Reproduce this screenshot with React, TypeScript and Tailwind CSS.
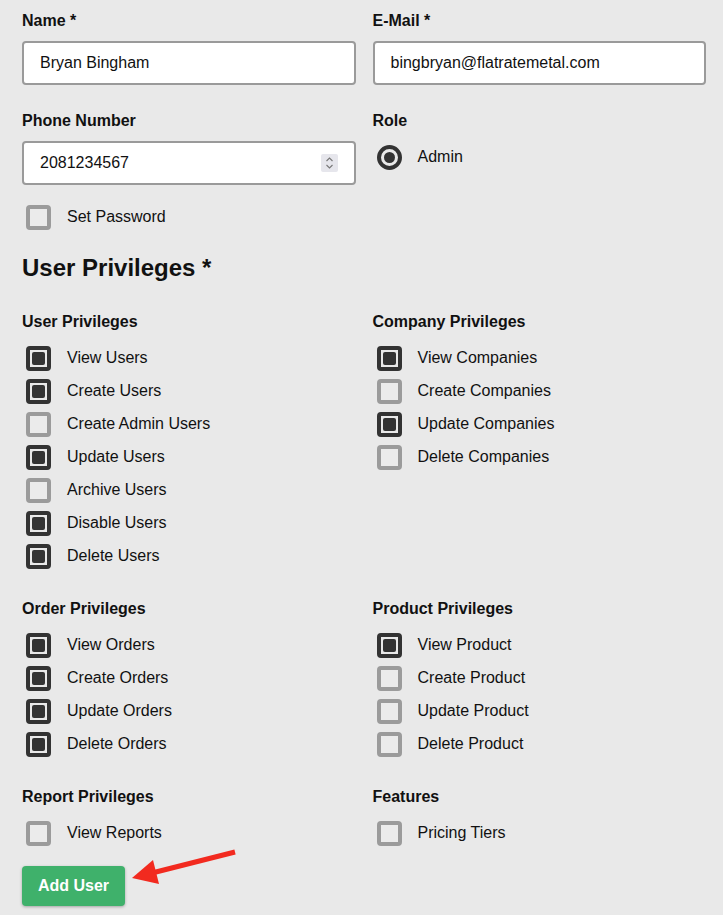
const userPrivs: [string, boolean][] = [
  ["View Users", true],
  ["Create Users", true],
  ["Create Admin Users", false],
  ["Update Users", true],
  ["Archive Users", false],
  ["Disable Users", true],
  ["Delete Users", true],
];

const companyPrivs: [string, boolean][] = [
  ["View Companies", true],
  ["Create Companies", false],
  ["Update Companies", true],
  ["Delete Companies", false],
];

const orderPrivs: [string, boolean][] = [
  ["View Orders", true],
  ["Create Orders", true],
  ["Update Orders", true],
  ["Delete Orders", true],
];

const productPrivs: [string, boolean][] = [
  ["View Product", true],
  ["Create Product", false],
  ["Update Product", false],
  ["Delete Product", false],
];

function Check({ checked }: { checked: boolean }) {
  if (checked) {
    return (
      <span className="flex items-center justify-center w-[25px] h-[25px] rounded-[4px] border-4 border-[#333333] bg-[#e9e9e9]">
        <span className="block w-[13px] h-[13px] rounded-[2px] bg-[#333333]" />
      </span>
    );
  }
  return <span className="block w-[25px] h-[25px] rounded-[4px] border-4 border-[#9b9b9b] bg-[#ebebeb]" />;
}

function CheckRow({ label, checked }: { label: string; checked: boolean }) {
  return (
    <div className="flex items-center h-[33px]">
      <div className="w-[45px] pl-[4px] flex items-center">
        <Check checked={checked} />
      </div>
      <span className="text-[16px] text-[#111111] -mt-[2px]">{label}</span>
    </div>
  );
}

function Group({ title, items }: { title: string; items: [string, boolean][] }) {
  return (
    <div>
      <div className="text-[16px] font-bold leading-[20px] mb-[10px] text-[#111111]">{title}</div>
      {items.map(([l, c]) => (
        <CheckRow key={l} label={l} checked={c} />
      ))}
    </div>
  );
}

function Label({ children }: { children: React.ReactNode }) {
  return <div className="text-[16px] font-bold leading-[20px] mb-[10px] text-[#111111]">{children}</div>;
}

function TextBox({ value, spinner }: { value: string; spinner?: boolean }) {
  return (
    <div className="flex items-center justify-between h-[44px] bg-white border-2 border-[#9a9a9a] rounded-[4px] pl-4 pr-[16px]">
      <span className="text-[16px] text-[#111111]">{value}</span>
      {spinner && (
        <span className="flex items-center justify-center w-[17px] h-[18px] bg-[#e6e6ec] rounded-[2px]">
          <svg width="9" height="14" viewBox="0 0 9 14" fill="none" stroke="#777" strokeWidth="1.1">
            <path d="M1.5 5 L4.5 2 L7.5 5" />
            <path d="M1.5 9 L4.5 12 L7.5 9" />
          </svg>
        </span>
      )}
    </div>
  );
}

export default function App() {
  return (
    <div
      className="min-h-[915px] bg-[#e9e9e9] pl-[22px] pr-[17px] pt-[11px] text-[#111111]"
      style={{ fontFamily: '"Liberation Sans", Arial, Helvetica, sans-serif' }}
    >
      <div className="grid grid-cols-2 gap-x-[17px] gap-y-[26px]">
        <div>
          <Label>Name *</Label>
          <TextBox value="Bryan Bingham" />
        </div>
        <div>
          <Label>E-Mail *</Label>
          <TextBox value="bingbryan@flatratemetal.com" />
        </div>
        <div>
          <Label>Phone Number</Label>
          <TextBox value="2081234567" spinner />
        </div>
        <div>
          <div className="text-[16px] font-bold leading-[20px] mb-[10px]">Role</div>
          <div className="flex items-center h-[33px]">
            <div className="w-[45px] pl-[4px] flex items-center">
              <span className="flex items-center justify-center w-[25px] h-[25px] rounded-full border-4 border-[#333333] bg-[#e9e9e9]">
                <span className="block w-[11px] h-[11px] rounded-full bg-[#333333]" />
              </span>
            </div>
            <span className="text-[16px] -mt-[2px]">Admin</span>
          </div>
        </div>
      </div>

      <div className="mt-[16px]">
        <CheckRow label="Set Password" checked={false} />
      </div>

      <h2 className="mt-[19px] text-[24px] font-bold leading-[30px]">User Privileges *</h2>

      <div className="mt-[29px] grid grid-cols-2 gap-x-[17px] gap-y-[26px]">
        <Group title="User Privileges" items={userPrivs} />
        <Group title="Company Privileges" items={companyPrivs} />
        <Group title="Order Privileges" items={orderPrivs} />
        <Group title="Product Privileges" items={productPrivs} />
        <Group title="Report Privileges" items={[["View Reports", false]]} />
        <Group title="Features" items={[["Pricing Tiers", false]]} />
      </div>

      <div className="relative mt-[16px]">
        <button className="w-[103px] h-[40px] rounded-[4px] bg-[#3fb16b] text-white text-[16px] font-bold shadow-[0_1px_3px_rgba(0,0,0,0.3)]">
          Add User
        </button>
        <svg
          className="absolute left-[83px] top-[-20px]"
          width="160"
          height="50"
          viewBox="105 846 160 50"
        >
          <path d="M235 852 L148 874" stroke="#f22a1f" strokeWidth="5" fill="none" />
          <path d="M132 878 L153 860 L159 884 Z" fill="#f22a1f" />
        </svg>
      </div>
    </div>
  );
}
